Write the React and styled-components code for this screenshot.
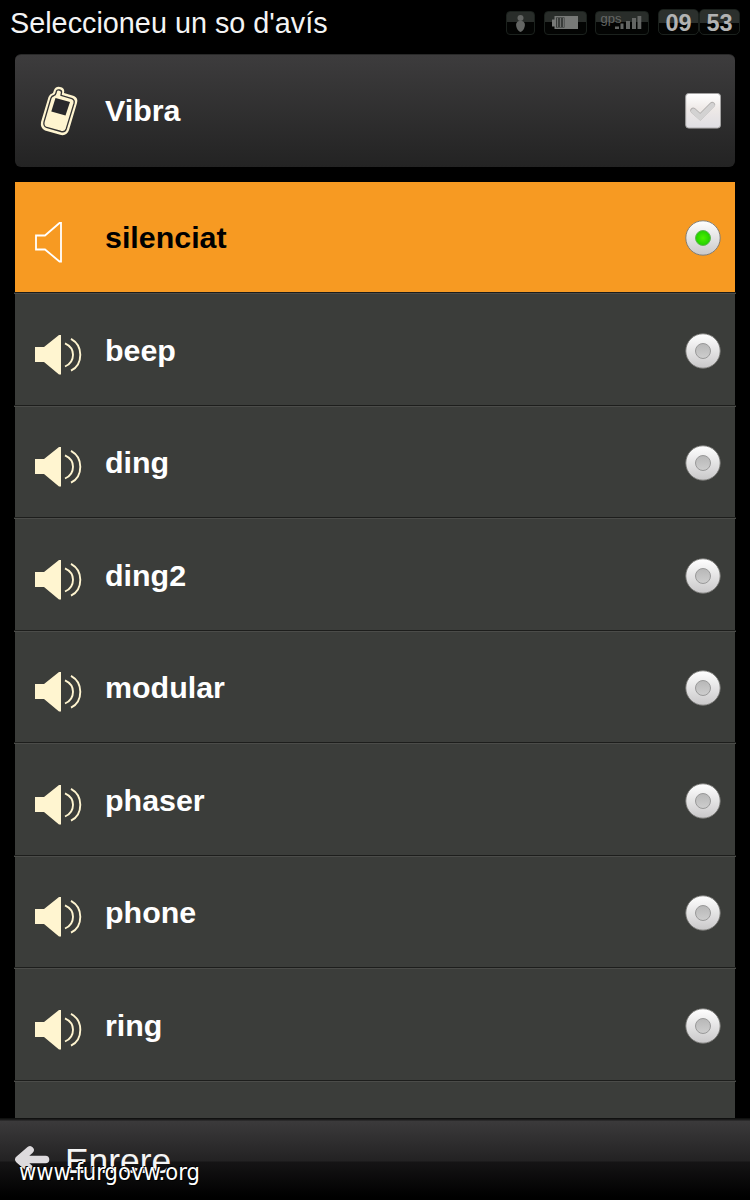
import React from "react";
import styled, { createGlobalStyle } from "styled-components";

const GlobalStyle = createGlobalStyle`
  body {
    margin: 0;
    background: #000;
    font-family: "Liberation Sans", Arial, sans-serif;
  }

  * {
    box-sizing: border-box;
  }
`;

const Screen = styled.div`
  display: flex;
  flex-direction: column;
  width: 750px;
  height: 1200px;
  overflow: hidden;
  background: #000;
`;

const StatusBar = styled.header`
  display: flex;
  justify-content: space-between;
  height: 54px;
  padding: 0 10px;
`;

const Title = styled.h1`
  margin: 0;
  padding-top: 6px;
  color: #f4f4f4;
  font-size: 28.8px;
  font-weight: 400;
  line-height: 34px;
  white-space: nowrap;
`;

const Indicators = styled.div`
  display: flex;
  align-items: flex-start;
  padding-top: 9px;
`;

const Indicator = styled.div`
  width: ${({ $width }) => $width}px;
  height: 24px;
  margin: 2px ${({ $gap }) => $gap}px 0 0;
  border: 1px solid #1b211d;
  border-radius: 4px;
  background: linear-gradient(#292d2a 0, #292d2a 10px, #030403 10px);

  svg {
    display: block;
  }
`;

const ClockDigits = styled.div`
  width: 41px;
  height: 26px;
  border: 1px solid #1b211d;
  border-radius: 5px;
  background: linear-gradient(#2c302d 0, #2c302d 13px, #030403 13px);
  color: #b2b2b2;
  font-size: 23.5px;
  font-weight: 700;
  line-height: 27px;
  text-align: center;
`;

const VibratePanel = styled.section`
  display: flex;
  align-items: center;
  height: 113px;
  margin: 0 15px 15px;
  padding: 0 14px 0 20px;
  border-top: 1px solid #292929;
  border-radius: 6px;
  background: linear-gradient(#3d3c3d, #232323);
`;

const IconSlot = styled.div`
  width: 70px;
  padding-top: ${({ $drop }) => $drop || 0}px;

  svg {
    display: block;
  }
`;

const Label = styled.span`
  flex: 1;
  padding-bottom: 2px;
  color: ${({ $dark }) => ($dark ? "#000" : "#fff")};
  font-size: 30.4px;
  font-weight: 700;
  line-height: 36px;
`;

const SoundList = styled.ul`
  flex: 1;
  min-height: 0;
  margin: 0;
  padding: 0 14px;
  overflow: hidden;
  list-style: none;
`;

const SoundItem = styled.li`
  border-bottom: 1px solid #4b4c49;
`;

const SoundRow = styled.div`
  display: flex;
  align-items: center;
  height: ${({ $selected }) => ($selected ? 110 : 110.5)}px;
  margin: 0 1px;
  padding: ${({ $selected }) => ($selected ? 2 : 3)}px 14px 0 20px;
  background: ${({ $selected }) => ($selected ? "#f79a22" : "#3b3d3a")};
`;

const RowEdge = styled.div`
  height: 1px;
  background: #1d1e1c;
`;

const Footer = styled.footer`
  position: relative;
  display: flex;
  height: 82px;
  padding: 22px 0 0 14px;
  border-top: 1px solid #101110;
  background: linear-gradient(
    #1b1b1b 0,
    #1b1b1b 1px,
    #3b3a3b 2px,
    #232223 42px,
    #151415 43px,
    #000 78px
  );
`;

const BackLabel = styled.span`
  padding-left: 15px;
  color: #f5f5f5;
  font-size: 35.4px;
  line-height: 40px;
`;

const Watermark = styled.span`
  position: absolute;
  top: 39px;
  left: 19px;
  color: #fff;
  font-family: "DejaVu Sans Condensed", "DejaVu Sans", sans-serif;
  font-size: 23.5px;
  font-stretch: condensed;
  line-height: 28px;
  text-shadow: 1px 1px 0 #000, -1px -1px 0 #000;
`;

const PhoneIcon = () => (
  <svg width="50" height="50" viewBox="35 86 50 50">
    <path
      d="M53 93L54 90Q56 86 60 87L62 87.5Q65 89 64 93L74 96Q78.5 98 77 103L69 130Q67 136 61 135L45 130.5Q40 128 41 122L48.5 97Q49.5 94 53 93Z"
      fill="#fff5d0"
    />
    <path
      d="M54 95.5Q55.5 95 56 93L56.5 91Q57 89.3 59.5 90Q62 90.7 61.5 92.5L61 95.3L72 98.6Q75 99.8 74 103.5L66.2 129Q65 132.5 61 131.5L46.5 127.5Q43.2 126 44 122L51 98Q51.8 96 54 95.5Z"
      fill="none"
      stroke="#353434"
      strokeWidth="1.3"
    />
    <path d="M55.5 98L70 102L65.5 115.5L51.3 111.5Z" fill="#29292b" />
  </svg>
);

const SpeakerIcon = ({ muted }) => (
  <svg width="50" height="50" viewBox="0 0 50 50">
    {muted ? (
      <path
        d="M1 18.5H10L24.5 6H26V44.5H24.5L10 32.5H1Z"
        fill="none"
        stroke="#fff"
        strokeWidth="1.8"
      />
    ) : (
      <>
        <path d="M0 18H9L24 6H26V45.5H24L9 33H0Z" fill="#fff5d0" />
        <path
          d="M30 14.3Q38 18 38 25.7Q38 34 30 37.5M36 9.8Q45.3 15 45.3 25.7Q45.3 37 36 41.7"
          fill="none"
          stroke="#fff5d0"
          strokeWidth="1.9"
        />
      </>
    )}
  </svg>
);

const Checkbox = () => (
  <svg width="36" height="36" viewBox="0 0 36 36">
    <defs>
      <linearGradient id="box" x2="0" y2="1">
        <stop stopColor="#fff" />
        <stop offset=".45" stopColor="#eee9e7" />
        <stop offset="1" stopColor="#dfdee3" />
      </linearGradient>
    </defs>
    <rect x=".7" y=".5" width="34.8" height="34.6" rx="3" fill="url(#box)" stroke="#a3a2a2" />
    <path
      d="M8.2 17.5L15.3 23.8L27.2 11.8"
      fill="none"
      stroke="#b0adac"
      strokeWidth="5.8"
      strokeLinecap="round"
    />
    <path
      d="M8.4 18.1L15.3 24.3L27.3 12.4"
      fill="none"
      stroke="#d3d2d2"
      strokeWidth="5"
      strokeLinecap="round"
    />
  </svg>
);

const Radio = ({ selected }) => (
  <svg width="36" height="36" viewBox="0 0 36 36">
    <defs>
      <linearGradient id="ring" x2="0" y2="1">
        <stop stopColor="#fff" />
        <stop offset="1" stopColor="#c9c8c9" />
      </linearGradient>
      <linearGradient id="dot" x2="0" y2="1">
        <stop stopColor="#b7b7b7" />
        <stop offset="1" stopColor="#cecece" />
      </linearGradient>
      <radialGradient id="led">
        <stop stopColor="#4bf000" />
        <stop offset="1" stopColor="#22cf00" />
      </radialGradient>
    </defs>
    <circle cx="18" cy="18" r="17.2" fill="url(#ring)" stroke="#777774" strokeWidth=".9" />
    <circle
      cx="18"
      cy="18"
      r="7.5"
      fill={selected ? "url(#led)" : "url(#dot)"}
      stroke={selected ? "#62b653" : "#999"}
    />
  </svg>
);

const BackArrow = () => (
  <svg width="36" height="36" viewBox="0 0 36 36">
    <path
      d="M6 18.5H31.5M16 9L5 18.5L16 28"
      fill="none"
      stroke="#dddadd"
      strokeWidth="7.6"
      strokeLinecap="round"
      strokeLinejoin="round"
    />
  </svg>
);

const StatusIcons = () => (
  <Indicators>
    <Indicator $width={29} $gap={9}>
      <svg width="27" height="22" fill="#646664">
        <circle cx="13.5" cy="6" r="3" />
        <path d="M13.5 9C17 9 18.3 11 17.8 14C17.3 17 15.5 19.5 13.5 20C11.5 19.5 9.7 17 9.2 14C8.7 11 10 9 13.5 9Z" />
      </svg>
    </Indicator>
    <Indicator $width={43} $gap={8}>
      <svg width="41" height="22">
        <path d="M9.5 4H33V17H9.5V14.5H7V7.5H9.5Z" fill="#777977" />
        <path d="M11 5.5H19.5V15.5H11Z" fill="#292d2a" />
        <path d="M12.5 6V15M15.5 6V15M18.5 6V15" stroke="#6c6e6c" strokeWidth="1.5" />
      </svg>
    </Indicator>
    <Indicator $width={54} $gap={9}>
      <svg width="52" height="22">
        <text x="4.5" y="10.5" fill="#646664" fontSize="13" fontFamily="Liberation Sans, sans-serif">
          gps
        </text>
        <path
          d="M19 14.5H23V17H19ZM24.5 11.5H27.5V17H24.5ZM30 9H34V17H30ZM36 6H40V17H36ZM41.5 4H45.3V17H41.5Z"
          fill="#646664"
        />
      </svg>
    </Indicator>
    <ClockDigits>09</ClockDigits>
    <ClockDigits>53</ClockDigits>
  </Indicators>
);

const sounds = ["silenciat", "beep", "ding", "ding2", "modular", "phaser", "phone", "ring", ""];

const App = () => {
  const selectedSound = "silenciat";

  return (
    <>
      <GlobalStyle />
      <Screen>
        <StatusBar>
          <Title>Seleccioneu un so d'avís</Title>
          <StatusIcons />
        </StatusBar>
        <VibratePanel>
          <IconSlot>
            <PhoneIcon />
          </IconSlot>
          <Label>Vibra</Label>
          <Checkbox />
        </VibratePanel>
        <SoundList>
          {sounds.map((sound) => {
            const selected = sound === selectedSound;
            return (
              <SoundItem key={"sound_" + sound}>
                <SoundRow $selected={selected}>
                  {sound && (
                    <>
                      <IconSlot $drop={selected ? 7 : 6}>
                        <SpeakerIcon muted={selected} />
                      </IconSlot>
                      <Label $dark={selected}>{sound}</Label>
                      <Radio selected={selected} />
                    </>
                  )}
                </SoundRow>
                <RowEdge />
              </SoundItem>
            );
          })}
        </SoundList>
        <Footer>
          <BackArrow />
          <BackLabel>Enrere</BackLabel>
          <Watermark>www.furgovw.org</Watermark>
        </Footer>
      </Screen>
    </>
  );
};

export default App;
